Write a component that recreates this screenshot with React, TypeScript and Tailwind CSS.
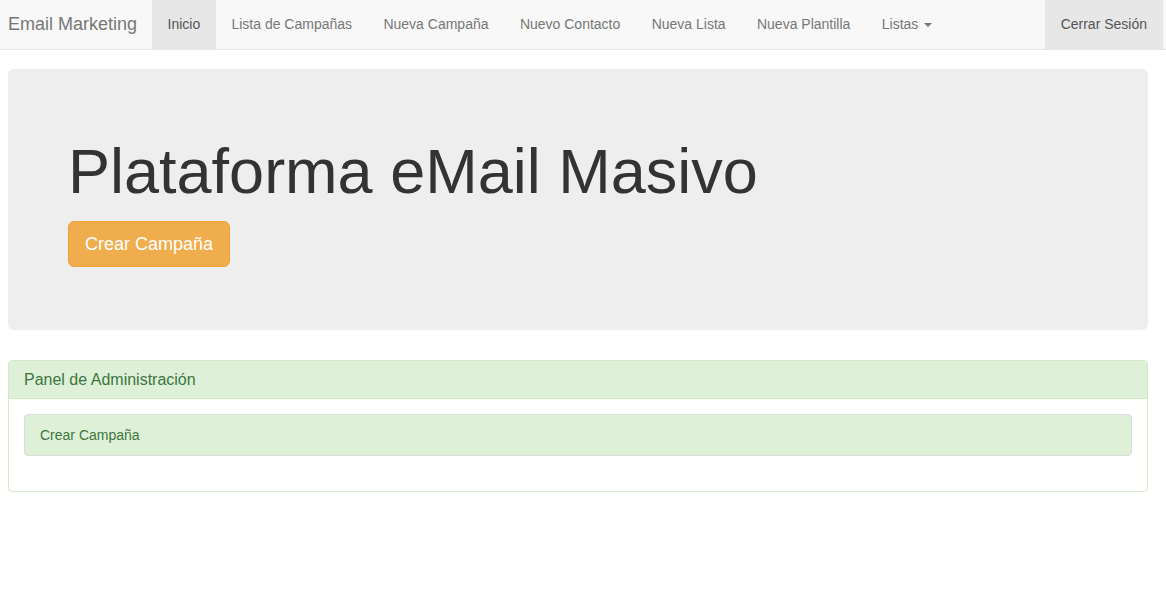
import React from "react";

const links = [
  "Lista de Campañas",
  "Nueva Campaña",
  "Nuevo Contacto",
  "Nueva Lista",
  "Nueva Plantilla",
];

export default function App() {
  return (
    <div
      className="min-h-[605px] bg-white text-[14px] text-[#333]"
      style={{ fontFamily: '"Liberation Sans", Arial, Helvetica, sans-serif' }}
    >
      <nav className="flex h-[50px] items-stretch border-b border-[#e7e7e7] bg-[#f8f8f8]">
        <a className="block pl-[8px] pr-[15px] pt-[14px] pb-[16px] text-[18px] leading-[20px] text-[#777]">
          Email Marketing
        </a>
        <ul className="flex">
          <li className="bg-[#e7e7e7] px-[15.5px] pt-[14px] pb-[16px] leading-[20px] text-[#555]">Inicio</li>
          {links.map((l) => (
            <li key={l} className="px-[15.7px] pt-[14px] pb-[16px] leading-[20px] text-[#777]">
              {l}
            </li>
          ))}
          <li className="flex items-start px-[15.7px] pt-[14px] pb-[16px] leading-[20px] text-[#777]">
            Listas
            <span className="ml-[6px] mt-[9px] inline-block h-0 w-0 border-l-[4px] border-r-[4px] border-t-[4px] border-l-transparent border-r-transparent border-t-[#777]" />
          </li>
        </ul>
        <div className="ml-auto flex pr-[3px]">
          <div className="bg-[#e7e7e7] px-[16px] pt-[14px] pb-[16px] leading-[20px] text-[#555]">Cerrar Sesión</div>
        </div>
      </nav>

      <div className="mx-[8px] mt-[19px] w-[1140px] rounded-[6px] bg-[#eee] pl-[60px] pt-[68px] pb-[63px]">
        <h1 className="mb-[15px] text-[63px] font-normal leading-[69px] text-[#333]">
          Plataforma eMail Masivo
        </h1>
        <button className="rounded-[6px] border border-[#eea236] bg-[#f0ad4e] px-[16px] py-[10px] text-[18px] leading-[24px] text-white">
          Crear Campaña
        </button>
      </div>

      <div className="mx-[8px] mt-[30px] w-[1140px] rounded-[4px] border border-[#d6e9c6] bg-white">
        <div className="rounded-t-[3px] border-b border-[#d6e9c6] bg-[#dff0d8] px-[15px] py-[10px] text-[16px] leading-[17px] text-[#3c763d]">
          Panel de Administración
        </div>
        <div className="p-[15px]">
          <div className="mb-[20px] rounded-[4px] border border-[#ddd] bg-[#dff0d8] px-[15px] py-[10px] leading-[20px] text-[#3c763d]">
            Crear Campaña
          </div>
        </div>
      </div>
    </div>
  );
}
